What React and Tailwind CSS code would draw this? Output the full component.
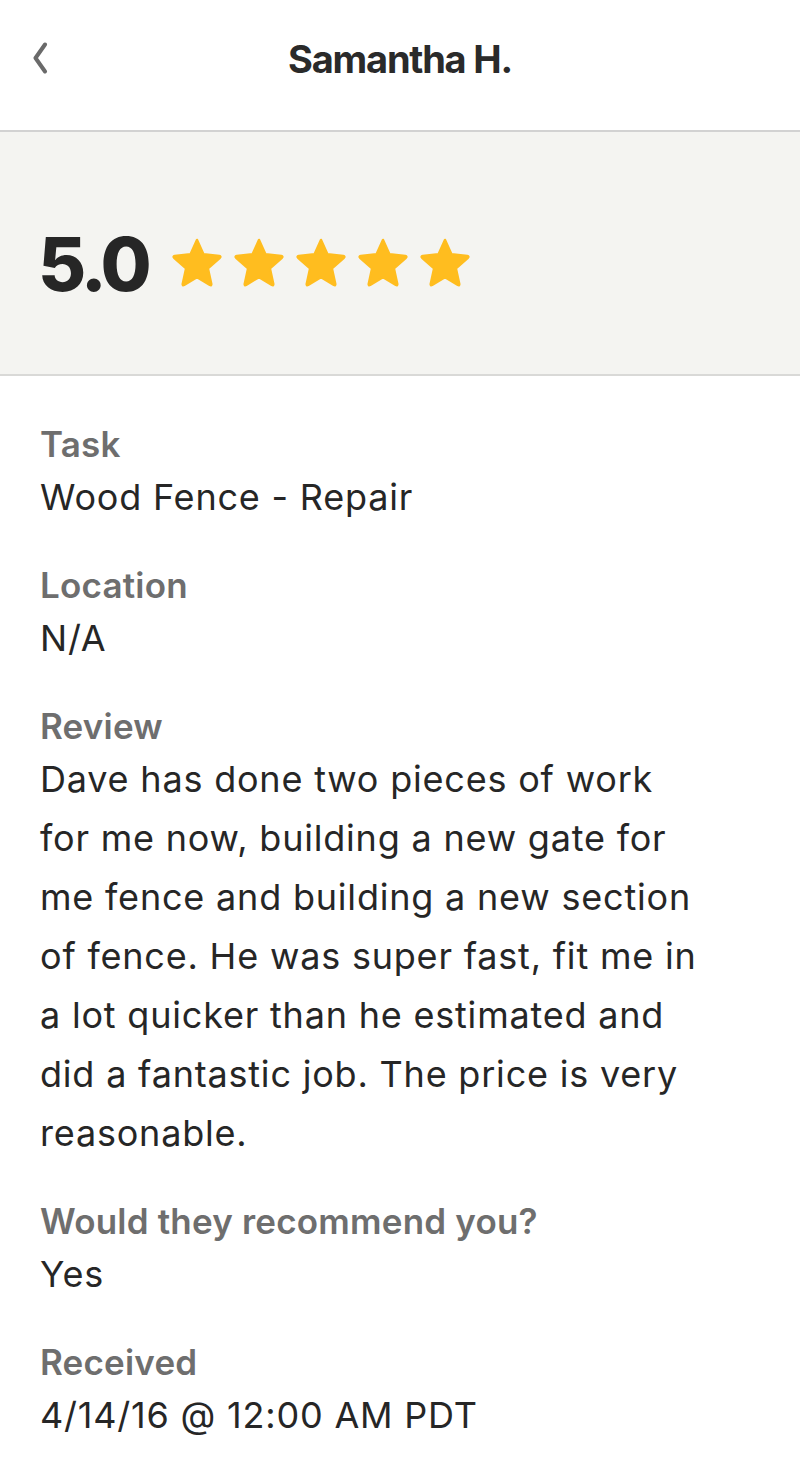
import React from "react";

const Star = () => (
    <svg width="54" height="52" viewBox="0 0 24 23" className="shrink-0">
        <path
            d="M12 1.2 L14.9 7.6 L21.9 8.3 Q22.8 8.5 22.2 9.2 L16.9 13.9 L18.4 20.8 Q18.5 21.7 17.7 21.3 L12 17.8 L6.3 21.3 Q5.5 21.7 5.6 20.8 L7.1 13.9 L1.8 9.2 Q1.2 8.5 2.1 8.3 L9.1 7.6 Z"
            fill="#FFBD1F"
            stroke="#FFBD1F"
            strokeWidth="1"
            strokeLinejoin="round"
        />
    </svg>
);

const Field = ({ label, children }) => (
    <div className="flex flex-col">
        <div className="text-[35px] leading-[48px] font-semibold text-[#6e6e6e] tracking-[0.2px]">{label}</div>
        <div className="text-[36px] leading-[59px] text-[#262626] tracking-[0.8px]">{children}</div>
    </div>
);

const reviewLines = [
    "Dave has done two pieces of work",
    "for me now, building a new gate for",
    "me fence and building a new section",
    "of fence. He was super fast, fit me in",
    "a lot quicker than he estimated and",
    "did a fantastic job. The price is very",
    "reasonable.",
];

export default function App() {
    return (
        <div className="w-[800px] min-h-[1466px] bg-white" style={{ fontFamily: "Inter, 'Open Sans', sans-serif" }}>
            {/* header */}
            <header className="relative h-[132px] flex items-center justify-center border-b-2 border-[#d2d2d2]">
                <button className="absolute left-[30px] top-[40px] w-[20px] h-[36px] flex items-center justify-center">
                    <svg width="16" height="32" viewBox="0 0 16 32">
                        <path d="M13 2.5 L3.5 16 L13 29.5" fill="none" stroke="#6a6a6a" strokeWidth="4" strokeLinecap="round" strokeLinejoin="round" />
                    </svg>
                </button>
                <h1 className="text-[38px] font-bold text-[#2a2a2a] tracking-[-1.2px] -mt-[12px]">Samantha H.</h1>
            </header>

            {/* rating */}
            <section className="h-[244px] bg-[#f4f4f1] border-b-2 border-[#d9d9d7] flex items-center px-[38px] gap-[22px] pt-[22px]">
                <span className="text-[74px] font-extrabold text-[#262626] tracking-[-4px] leading-none">5.0</span>
                <div className="flex items-center gap-[8px] mt-[-2px]">
                    <Star />
                    <Star />
                    <Star />
                    <Star />
                    <Star />
                </div>
            </section>

            {/* details */}
            <section className="px-[40px] pt-[44px] flex flex-col gap-[34px]">
                <Field label="Task">Wood Fence - Repair</Field>
                <Field label="Location">N/A</Field>
                <Field label="Review">
                    {reviewLines.map((l) => (
                        <span key={l} className="block">{l}</span>
                    ))}
                </Field>
                <Field label="Would they recommend you?">Yes</Field>
                <Field label="Received">4/14/16 @ 12:00 AM PDT</Field>
            </section>
        </div>
    );
}
